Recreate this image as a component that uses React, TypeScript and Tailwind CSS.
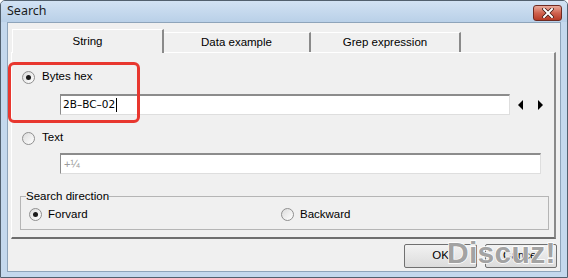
import React from 'react'

function Radio({ checked }: { checked?: boolean }) {
  return (
    <span className="w-[13px] h-[13px] rounded-full border border-[#8f8f8f] bg-gradient-to-br from-[#dcdcdc] to-white flex items-center justify-center shrink-0">
      {checked && <span className="w-[5px] h-[5px] rounded-full bg-[#1a1a1a]" />}
    </span>
  )
}

function Tab({ label, active, w }: { label: string; active?: boolean; w: string }) {
  if (active) {
    return (
      <div className={`${w} h-[24px] border-t border-l border-white border-r-2 border-r-[#8a8a8a] bg-[#f0f0f0] flex items-center justify-center relative z-10 -mb-px`}>
        <span className="pt-[1px]">{label}</span>
      </div>
    )
  }
  return (
    <div className={`${w} h-[20px] border-t border-white border-r-2 border-r-[#8a8a8a] bg-[#f0f0f0] flex items-center justify-center`}>
      {label}
    </div>
  )
}

export default function App() {
  return (
    <div className="w-[568px] h-[278px] bg-[#c4d8ed] border border-[#52606e] rounded-t-[5px] flex flex-col relative overflow-hidden text-[11.5px] text-black font-['Liberation_Sans',sans-serif]">
      <div className="h-[21px] flex items-center bg-gradient-to-b from-[#d2e2f3] to-[#b9d0e8] shrink-0">
        <span className="pl-[6px] text-[12.5px] text-[#1b1b1b] font-['Noto_Sans',sans-serif]">Search</span>
        <button className="ml-auto mr-[5px] mt-[3px] w-[29px] h-[16px] rounded-[3px] border border-[#6e2a22] bg-gradient-to-b from-[#e8a99a] via-[#d0624f] to-[#b63a26] flex items-center justify-center">
          <svg width="12" height="10" viewBox="0 0 12 10">
            <path d="M2 1 L10 9 M10 1 L2 9" stroke="#3a1410" strokeWidth="3.4" strokeLinecap="square" />
            <path d="M2 1 L10 9 M10 1 L2 9" stroke="#ffffff" strokeWidth="2" strokeLinecap="square" />
          </svg>
        </button>
      </div>
      <div className="flex-1 mx-[6px] mb-[5px] bg-[#f0f0f0] border border-[#8ea4ba] flex flex-col pl-[3px] pt-[6px]">
        <div className="flex items-end ml-px">
          <Tab label="String" active w="w-[152px]" />
          <Tab label="Data example" w="w-[147px]" />
          <Tab label="Grep expression" w="w-[150px]" />
        </div>
        <div className="w-[545px] h-[187px] border-t border-l border-white border-r-2 border-b-2 border-r-[#8a8a8a] border-b-[#6e6e6e] flex flex-col pl-[10px] pt-[16px]">
          <label className="flex items-center gap-[7px] h-[16px]">
            <Radio checked />
            <span>Bytes hex</span>
          </label>
          <div className="flex items-center mt-[9px] ml-[38px]">
            <div className="w-[450px] h-[21px] bg-white border-t-2 border-l border-[#8c8c8c] border-r border-b border-r-[#dedede] border-b-[#dedede] flex items-center pl-[2px] font-['DejaVu_Sans',sans-serif] text-[10.5px]">
              <span>2B–BC–02</span>
              <span className="w-px h-[14px] bg-black ml-px" />
            </div>
            <svg width="30" height="10" viewBox="0 0 30 10" className="ml-[7px]">
              <path d="M6 0 L6 10 L1 5 Z" fill="#000" />
              <path d="M21 0 L21 10 L26 5 Z" fill="#000" />
            </svg>
          </div>
          <label className="flex items-center gap-[7px] h-[16px] mt-[15px]">
            <Radio />
            <span>Text</span>
          </label>
          <div className="w-[481px] h-[21px] mt-[7px] ml-[38px] bg-white border-t-2 border-l border-[#8c8c8c] border-r border-b border-r-[#dedede] border-b-[#dedede] flex items-center pl-[3px] text-[#9a9a9a] text-[11px]">
            +¼
          </div>
          <div className="w-[529px] h-[34px] mt-[22px] -ml-[2px] border border-[#b5b5b5] flex flex-col">
            <span className="-mt-[8px] ml-[5px] w-fit bg-[#f0f0f0] leading-[14px]">Search direction</span>
            <div className="flex items-center mt-[3px] pl-[8px]">
              <label className="flex items-center gap-[6px] w-[252px]">
                <Radio checked />
                <span>Forvard</span>
              </label>
              <label className="flex items-center gap-[6px]">
                <Radio />
                <span>Backward</span>
              </label>
            </div>
          </div>
        </div>
        <div className="flex justify-end gap-[8px] mt-[5px] mr-[3px]">
          <button className="w-[73px] h-[24px] border border-[#707070] rounded-[2px] bg-gradient-to-b from-[#f2f2f2] to-[#dcdcdc]">OK</button>
          <button className="w-[72px] h-[24px] border border-[#707070] rounded-[2px] bg-gradient-to-b from-[#f2f2f2] to-[#dcdcdc]">Cancel</button>
        </div>
      </div>
      <div className="absolute left-[7px] top-[61px] w-[132px] h-[61px] border-[3px] border-[#e8372f] rounded-[6px]" />
      <div className="absolute left-[446px] top-[235px] text-[30px] leading-[34px] font-bold tracking-[0.3px] text-[#a3a3a3] [-webkit-text-stroke:1.5px_#ffffff] [paint-order:stroke_fill] font-['Liberation_Sans',sans-serif]">
        Discuz!
      </div>
    </div>
  )
}
